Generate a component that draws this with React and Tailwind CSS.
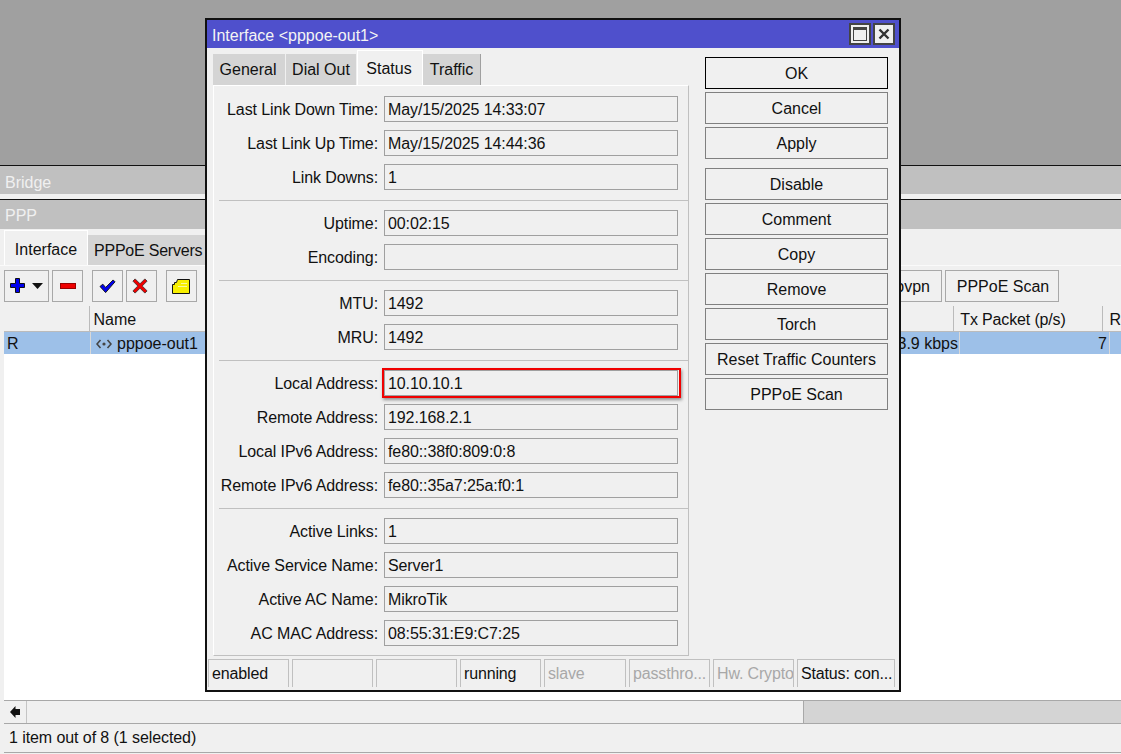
const rows = [
  [
    ["Last Link Down Time:", "May/15/2025 14:33:07"],
    ["Last Link Up Time:", "May/15/2025 14:44:36"],
    ["Link Downs:", "1"],
  ],
  [
    ["Uptime:", "00:02:15"],
    ["Encoding:", ""],
  ],
  [
    ["MTU:", "1492"],
    ["MRU:", "1492"],
  ],
  [
    ["Local Address:", "10.10.10.1", true],
    ["Remote Address:", "192.168.2.1"],
    ["Local IPv6 Address:", "fe80::38f0:809:0:8"],
    ["Remote IPv6 Address:", "fe80::35a7:25a:f0:1"],
  ],
  [
    ["Active Links:", "1"],
    ["Active Service Name:", "Server1"],
    ["Active AC Name:", "MikroTik"],
    ["AC MAC Address:", "08:55:31:E9:C7:25"],
  ],
];

function Field({ label, value, marked }) {
  return (
    <div className="flex h-[26px] items-center">
      <div className="w-[159px] shrink-0 pt-[2px] text-right text-[16px] leading-none tracking-[-0.1px] text-[#111]">{label}</div>
      <div className="relative ml-[6px] flex h-[26px] w-[294px] items-center border border-[#a0a0a0] pt-[2px] pl-[3px] text-[16px] leading-none tracking-[-0.1px] text-[#111]">
        {value}
        {marked && (
          <div className="absolute -top-[3px] -left-[3px] h-[30px] w-[299px] border-2 border-[#f00000] shadow-[1px_2px_3px_rgba(0,0,0,0.4)]" />
        )}
      </div>
    </div>
  );
}

function DialogButton({ label, primary }) {
  return (
    <button
      className={`h-[32px] w-[183px] border bg-[#f0f0f0] pt-[2px] text-center text-[16px] leading-none text-[#111] ${
        primary ? "border-black" : "border-[#808080]"
      }`}
    >
      {label}
    </button>
  );
}

function ToolButton({ w, children }) {
  return (
    <div className="flex h-[32px] items-center justify-center border border-[#a8a8a8] bg-[#f0f0f0]" style={{ width: w }}>
      {children}
    </div>
  );
}

function StatusCell({ w, muted, children }) {
  return (
    <div
      className={`flex h-[28px] items-center overflow-hidden whitespace-nowrap border-x border-t border-[#c0c0c0] pl-[3px] text-[16px] leading-none tracking-[-0.15px] ${
        muted ? "text-[#a8a8a8]" : "text-[#111]"
      }`}
      style={{ width: w }}
    >
      {children}
    </div>
  );
}

function Dialog() {
  return (
    <div className="absolute top-[18px] left-[205px] flex h-[674px] w-[696px] flex-col border-2 border-[#111] bg-[#f0f0f0]">
      <div className="flex h-[28px] shrink-0 items-center justify-between bg-[#4f50cc] pr-[4px] pl-[5px]">
        <span className="pt-[3px] text-[16px] leading-none text-[#f4f4f4]">Interface &lt;pppoe-out1&gt;</span>
        <div className="flex gap-[2px]">
          <div className="flex h-[22px] w-[22px] items-center justify-center border-2 border-[#444] bg-[#f0f0f0]">
            <div className="h-[14px] w-[14px] border border-t-[3px] border-[#444]" />
          </div>
          <div className="flex h-[22px] w-[22px] items-center justify-center border-2 border-[#444] bg-[#f0f0f0]">
            <svg width="12" height="12" viewBox="0 0 12 12">
              <path d="M1.5 1.5 L10.5 10.5 M10.5 1.5 L1.5 10.5" stroke="#333" strokeWidth="2.4" />
            </svg>
          </div>
        </div>
      </div>

      <div className="flex flex-1 gap-[16px] pl-[6px]">
        <div className="w-[476px]">
          <div className="flex h-[37px] items-end">
            {[
              ["General", "w-[72px] pr-[2px]"],
              ["Dial Out", "w-[70px]"],
            ].map(([t, w]) => (
              <div key={t} className={`${w} mr-[1px] flex h-[31px] items-center justify-center bg-[#d4d4d4] text-[16px] leading-none text-[#111]`}>
                {t}
              </div>
            ))}
            <div className="flex h-[35px] w-[66px] items-center justify-center border-x border-t border-white bg-[#f0f0f0] pt-[1px] pr-[2px] text-[16px] leading-none text-[#111]">
              Status
            </div>
            <div className="flex h-[31px] w-[58px] items-center justify-center border-r border-[#a0a0a0] bg-[#d4d4d4] text-[16px] leading-none text-[#111]">
              Traffic
            </div>
          </div>
          <div className="h-[571px] border border-t-white border-r-[#c0c0c0] border-b-[#c0c0c0] border-l-white pt-[10px] pl-[5px]">
            {rows.map((group, i) => (
              <div key={i} className={i > 0 ? "mt-[10px] border-t border-[#c0c0c0] pt-[9px]" : ""}>
                <div className="flex flex-col gap-[8px]">
                  {group.map(([label, value, marked]) => (
                    <Field key={label} label={label} value={value} marked={marked} />
                  ))}
                </div>
              </div>
            ))}
          </div>
        </div>

        <div className="flex flex-col pt-[9px]">
          <div className="flex flex-col gap-[3px]">
            <DialogButton label="OK" primary />
            <DialogButton label="Cancel" />
            <DialogButton label="Apply" />
          </div>
          <div className="mt-[9px] flex flex-col gap-[3px]">
            {["Disable", "Comment", "Copy", "Remove", "Torch", "Reset Traffic Counters", "PPPoE Scan"].map((b) => (
              <DialogButton key={b} label={b} />
            ))}
          </div>
        </div>
      </div>

      <div className="flex gap-[3px] pb-[3px] pl-[1px]">
        <StatusCell w={81}>enabled</StatusCell>
        <StatusCell w={81} />
        <StatusCell w={81} />
        <StatusCell w={81}>running</StatusCell>
        <StatusCell w={82} muted>slave</StatusCell>
        <StatusCell w={81} muted>passthro...</StatusCell>
        <StatusCell w={81} muted>Hw. Crypto</StatusCell>
        <StatusCell w={98}>Status: con...</StatusCell>
      </div>
    </div>
  );
}

export default function App() {
  return (
    <div className="relative h-[754px] w-[1121px] overflow-hidden bg-[#f0f0f0] font-['Liberation_Sans',Arial,sans-serif]">
      <div className="h-[165px] bg-[#a0a0a0]" />
      <div className="h-[1px] bg-[#111]" />
      <div className="flex h-[28px] items-center bg-[#c0c0c0] pt-[6px] pl-[5px] text-[16px] leading-none text-[#f0f0f0]">Bridge</div>
      <div className="h-[5px] bg-[#f0f0f0]" />
      <div className="h-[1px] bg-[#111]" />
      <div className="flex h-[29px] items-center bg-[#c0c0c0] pt-[2px] pl-[5px] text-[16px] leading-none text-[#f0f0f0]">PPP</div>

      <div className="flex h-[36px] items-end pl-[4px]">
        <div className="flex h-[35px] w-[84px] items-center justify-center border-x border-t border-white pt-[3px] text-[16px] leading-none text-[#111]">
          Interface
        </div>
        <div className="flex h-[30px] w-[120px] items-center bg-[#d4d4d4] pt-[2px] pl-[6px] text-[16px] leading-none tracking-[-0.22px] text-[#111]">
          PPPoE Servers
        </div>
      </div>

      <div className="flex h-[41px] items-center border-t border-[#fafafa] pl-[4px]">
        <ToolButton w={45}>
          <svg width="34" height="16" viewBox="0 0 34 16">
            <path d="M5.5 0.5 h4 v5 h5 v4 h-5 v5 h-4 v-5 h-5 v-4 h5 z" fill="#0000ee" stroke="#111" />
            <path d="M22 5 h11 l-5.5 6 z" fill="#111" />
          </svg>
        </ToolButton>
        <div className="ml-[3px]">
          <ToolButton w={31}>
            <div className="h-[6px] w-[16px] border border-[#900] bg-[#ee0000]" />
          </ToolButton>
        </div>
        <div className="ml-[9px]">
          <ToolButton w={31}>
            <svg className="mr-[1px]" width="17" height="15" viewBox="0 0 18 16">
              <path d="M1 8 L4 5.5 L7 9 L15 1 L17 3 L7 14.5 Z" fill="#0000ee" stroke="#111" />
            </svg>
          </ToolButton>
        </div>
        <div className="ml-[3px]">
          <ToolButton w={31}>
            <svg className="mr-[3px]" width="16" height="16" viewBox="0 0 18 18">
              <path d="M1 3.5 L3.5 1 L9 6.5 L14.5 1 L17 3.5 L11.5 9 L17 14.5 L14.5 17 L9 11.5 L3.5 17 L1 14.5 L6.5 9 Z" fill="#ee0000" stroke="#222" strokeWidth="0.8" />
            </svg>
          </ToolButton>
        </div>
        <div className="ml-[9px]">
          <ToolButton w={31}>
            <svg className="mr-[2px]" width="18" height="15" viewBox="0 0 18 15">
              <path d="M5.5 0.5 H17.5 V14.5 H0.5 V5.5 H2.5 V3.5 H4.5 Z" fill="#f8f000" stroke="#111" />
              <path d="M9 4.5 H15 M6 7.5 H15" stroke="#f8f8a0" />
            </svg>
          </ToolButton>
        </div>
        <div className="mr-[62px] ml-auto flex">
          <div className="flex h-[32px] w-[50px] items-center justify-end border border-[#a8a8a8] pt-[2px] pr-[11px] text-[16px] leading-none text-[#111]">
            ovpn
          </div>
          <div className="ml-[3px] flex h-[32px] w-[114px] items-center justify-center border border-[#a8a8a8] pt-[2px] pl-[2px] text-[16px] leading-none text-[#111]">
            PPPoE Scan
          </div>
        </div>
      </div>

      <div className="ml-[4px] flex h-[25px] items-center bg-[#f0f0f0] text-[16px] leading-none text-[#111]">
        <div className="h-full w-[87px] border-r border-[#bbb]" />
        <div className="flex h-full w-[869px] items-center border-r border-[#bbb] pt-[2px] pl-[3px]">Name</div>
        <div className="flex h-full w-[150px] items-center border-r border-[#bbb] pt-[2px] pl-[6px] tracking-[-0.15px]">Tx Packet (p/s)</div>
        <div className="pt-[2px] pl-[6px]">R</div>
      </div>

      <div className="ml-[4px] flex h-[23px] items-center border-t border-[#bbb] bg-[#9dc0e8] text-[16px] leading-none text-[#111]">
        <div className="flex h-full w-[87px] items-center border-r border-[#d8d8d8] pt-[2px] pl-[3px]">R</div>
        <div className="flex h-full w-[869px] items-center justify-between border-r border-[#d8d8d8] pt-[2px] pr-[1px] pl-[5px]">
          <span className="flex items-center gap-[5px]">
            <svg width="16" height="10" viewBox="0 0 16 10">
              <path d="M4.5 1 L1 5 L4.5 9 M11.5 1 L15 5 L11.5 9" fill="none" stroke="#444" strokeWidth="1.6" />
              <circle cx="8" cy="5" r="1.6" fill="#444" />
            </svg>
            pppoe-out1
          </span>
          <span>3.9 kbps</span>
        </div>
        <div className="flex h-full w-[150px] items-center justify-end border-r border-[#d8d8d8] pt-[2px] pr-[2px]">7</div>
      </div>

      <div className="ml-[4px] h-[346px] bg-white" />

      <div className="ml-[4px] flex h-[24px] border-y border-[#a8a8a8]">
        <div className="flex w-[23px] items-center justify-center border-r border-[#c4c4c4]">
          <svg width="10" height="12" viewBox="0 0 10 12">
            <path d="M0 6 L5.5 0 V3 H10 V9 H5.5 V12 Z" fill="#111" />
          </svg>
        </div>
        <div className="w-[777px] border-r border-[#a8a8a8]" />
        <div className="flex-1 bg-[#d4d4d4]" />
      </div>

      <div className="ml-[4px] flex h-[29px] items-center border-b border-[#a8a8a8] pl-[5px] text-[16px] leading-none tracking-[-0.08px] text-[#111]">
        1 item out of 8 (1 selected)
      </div>

      <Dialog />
    </div>
  );
}
